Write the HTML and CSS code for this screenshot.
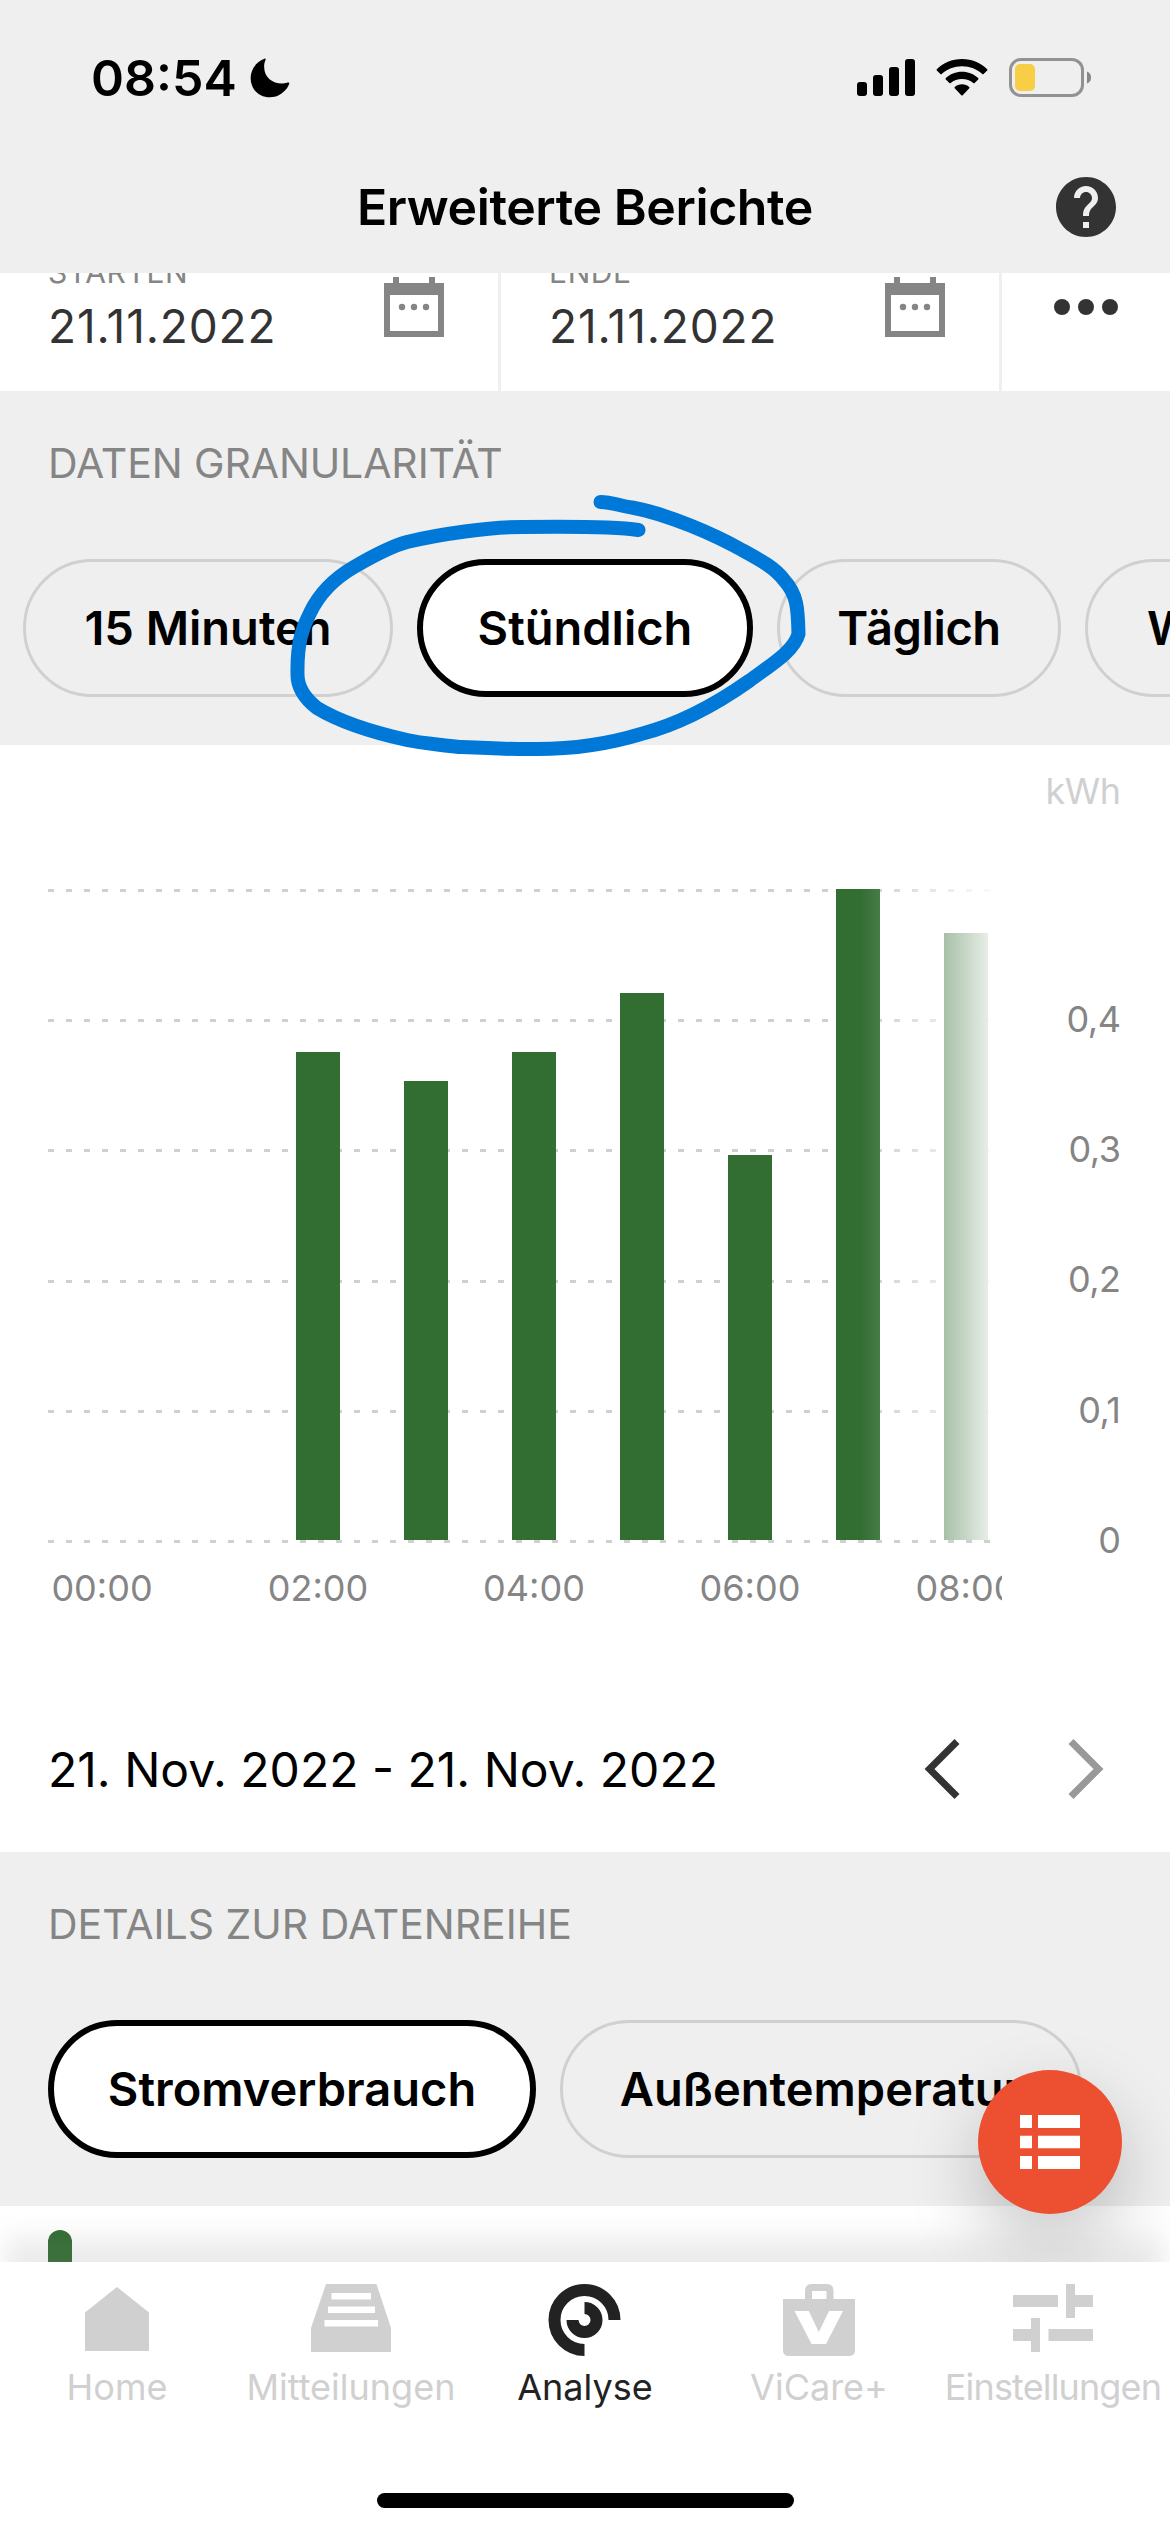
FILE: index.html
```html
<!DOCTYPE html>
<html lang="de">
<head>
<meta charset="utf-8">
<title>Erweiterte Berichte</title>
<link rel="stylesheet" href="styles.css">
</head>
<body>
<div class="screen">
  <header class="top">
    <div class="status">
      <div class="status-left">
        <span class="time">08:54</span>
        <svg class="moon" width="40" height="40" viewBox="0 0 40 40"><path d="M15 .6C3 5 -2 17 2 27.500C7 40 22 42.500 31.500 35.500C36 32 38.500 29 39.400 25C39.300 24.300 38.500 24.300 37.800 24.600C26 28 12.500 21 14.300 6C14.500 4 15.500 2.500 15.700 1.200C15.700 .7 15.400 .5 15 .6Z"/></svg>
      </div>
      <div class="status-right">
        <svg width="60" height="40" viewBox="0 0 60 40"><rect x="1" y="24" width="10" height="14" rx="3"/><rect x="17" y="17" width="10" height="21" rx="3"/><rect x="33" y="9" width="10" height="29" rx="3"/><rect x="49" y="1" width="10" height="37" rx="3"/></svg>
        <svg class="wifi" width="52" height="40" viewBox="0 0 52 40"><path d="M26 1C36 1 45 5 51.200 11.200C51.600 11.700 51.600 12 51.200 12.500L47.600 16C47.200 16.400 46.700 16.400 46.300 16C41 11.200 34 8.300 26 8.300S11 11.200 5.700 16C5.300 16.400 4.800 16.400 4.400 16L.8 12.500C.4 12 .4 11.700 .8 11.200C7 5 16 1 26 1Z"/><path d="M26 13.800C32.300 13.800 38 16.200 42.200 20.100C42.600 20.600 42.600 21 42.200 21.400L38.600 25C38.200 25.300 37.700 25.300 37.300 25C34.300 22.400 30.300 21 26 21S17.700 22.400 14.700 25C14.300 25.300 13.800 25.300 13.400 25L9.800 21.400C9.400 21 9.400 20.600 9.800 20.100C14 16.200 19.700 13.800 26 13.800Z"/><path d="M26 26.300C28.800 26.300 31.300 27.300 33.200 28.900C33.700 29.300 33.700 29.800 33.300 30.200L26.700 37.200C26.300 37.700 25.700 37.700 25.300 37.200L18.700 30.200C18.300 29.800 18.300 29.300 18.800 28.900C20.700 27.300 23.200 26.300 26 26.300Z"/></svg>
        <svg width="84" height="40" viewBox="0 0 84 40"><rect x="1.500" y="1.500" width="72" height="36" rx="10.500" fill="none" stroke="#929292" stroke-width="3"/><rect x="6" y="6" width="20" height="27" rx="5" fill="#f7ce46"/><path d="M78 13.500Q82 15 82 19.500T78 25.500Z" fill="#868686"/></svg>
      </div>
    </div>
    <div class="titlebar">
      <h1>Erweiterte Berichte</h1>
      <svg class="help" width="72" height="72" viewBox="0 0 24 24"><path fill="#333" d="M12 2C6.480 2 2 6.480 2 12s4.480 10 10 10 10-4.480 10-10S17.520 2 12 2zm1 17h-2v-2h2v2zm2.070-7.750l-.9.920C13.450 12.900 13 13.500 13 15h-2v-.5c0-1.100.45-2.100 1.170-2.830l1.240-1.260c.37-.36.59-.86.59-1.410 0-1.100-.9-2-2-2s-2 .9-2 2H8c0-2.210 1.790-4 4-4s4 1.790 4 4c0 .88-.36 1.680-.93 2.250z"/></svg>
    </div>
  </header>

  <main class="content">
    <section class="dates">
      <div class="date">
        <div class="date-text"><span class="date-label">STARTEN</span><span class="date-value">21.11.2022</span></div>
        <svg class="cal" width="60" height="60" viewBox="0 0 60 60"><path fill="#858585" fill-rule="evenodd" d="M9 0h6v6h30V0h6v6h9v54H0V6h9ZM6 18v36h48V18Z"/><g fill="#858585"><circle cx="18" cy="30" r="3.200"/><circle cx="30" cy="30" r="3.200"/><circle cx="42" cy="30" r="3.200"/></g></svg>
      </div>
      <div class="date">
        <div class="date-text"><span class="date-label">ENDE</span><span class="date-value">21.11.2022</span></div>
        <svg class="cal" width="60" height="60" viewBox="0 0 60 60"><path fill="#858585" fill-rule="evenodd" d="M9 0h6v6h30V0h6v6h9v54H0V6h9ZM6 18v36h48V18Z"/><g fill="#858585"><circle cx="18" cy="30" r="3.200"/><circle cx="30" cy="30" r="3.200"/><circle cx="42" cy="30" r="3.200"/></g></svg>
      </div>
      <div class="more"><i></i><i></i><i></i></div>
    </section>

    <section class="group">
      <h2 class="l-gran">DATEN GRANULARITÄT</h2>
      <div class="chips chips-gran">
        <span class="chip c15">15 Minuten</span>
        <span class="chip chour on">Stündlich</span>
        <span class="chip cday">Täglich</span>
        <span class="chip cweek">Wöchentlich</span>
      </div>
      <svg class="marker" width="540" height="280" viewBox="280 480 540 280"><path fill="none" stroke="#0078d7" stroke-width="14" stroke-linecap="round" stroke-linejoin="round" d="M600.500 502C612 502 620 506 632 507.500C668 514 715 535 742 550C762 561 775 568 784 580C797 594 798 608 798.500 634C794 651 772 664 749 681C715 705 680 724 641 734C605 745 570 749 537 749C510 749.500 480 748 459 747C435 744 420 743 407 740C380 734 345 725 317 708C303 697 297 686 297.500 673C297 642 303 626 310 613C320 592 335 578 354 567C378 553 392 546 407 542C440 534 490 527 522 527C560 526.500 615 526.500 638.500 530"/></svg>
    </section>

    <section class="chart">
      <svg width="1170" height="920" viewBox="0 745 1170 920">
        <defs>
          <linearGradient id="fade" gradientUnits="userSpaceOnUse" x1="860" y1="0" x2="1002" y2="0">
            <stop offset="0" stop-color="#fff" stop-opacity="0"/>
            <stop offset=".141" stop-color="#fff" stop-opacity=".1"/>
            <stop offset=".592" stop-color="#fff" stop-opacity=".57"/>
            <stop offset=".9" stop-color="#fff" stop-opacity=".88"/>
            <stop offset="1" stop-color="#fff"/>
          </linearGradient>
          <clipPath id="plot"><rect x="0" y="745" width="1002" height="920"/></clipPath>
        </defs>
        <g stroke="#d0d0d0" stroke-width="3" stroke-dasharray="6 12">
          <path d="M48 890.500H1002M48 1020.500H1002M48 1150.500H1002M48 1281.500H1002M48 1411.500H1002"/>
        </g>
        <g fill="#326d32">
          <rect x="296" y="1052" width="44" height="488"/>
          <rect x="404" y="1081" width="44" height="459"/>
          <rect x="512" y="1052" width="44" height="488"/>
          <rect x="620" y="993" width="44" height="547"/>
          <rect x="728" y="1155" width="44" height="385"/>
          <rect x="836" y="889" width="44" height="651"/>
          <rect x="944" y="933" width="44" height="607"/>
        </g>
        <rect x="860" y="880" width="142" height="660" fill="url(#fade)"/>
        <path d="M48 1541.500H1002" stroke="#d0d0d0" stroke-width="3" stroke-dasharray="6 12"/>
        <g class="xlab" clip-path="url(#plot)">
          <text x="102" y="1601">00:00</text><text x="318" y="1601">02:00</text><text x="534" y="1601">04:00</text><text x="750" y="1601">06:00</text><text x="966" y="1601">08:00</text>
        </g>
        <g class="ylab">
          <text class="unit" x="1120.500" y="803.500">kWh</text>
          <text x="1120.500" y="1032">0,4</text><text x="1120.500" y="1162">0,3</text><text x="1120.500" y="1292">0,2</text><text x="1120.500" y="1423">0,1</text><text x="1120.500" y="1553">0</text>
        </g>
      </svg>
      <div class="range">
        <span class="range-text">21. Nov. 2022 - 21. Nov. 2022</span>
        <svg width="180" height="62" viewBox="0 0 180 62" fill="none" stroke-width="7"><path stroke="#333" d="M33 3.500L5.500 31L33 58.500"/><path stroke="#999" d="M147 3.500L174.500 31L147 58.500"/></svg>
      </div>
    </section>

    <section class="group">
      <h2 class="l-det">DETAILS ZUR DATENREIHE</h2>
      <div class="chips chips-det">
        <span class="chip cpow on">Stromverbrauch</span>
        <span class="chip ctemp">Außentemperatur</span>
      </div>
    </section>
    <section class="legend"><div class="pill"></div></section>
    <button class="fab" aria-label="Liste"><svg width="60" height="54" viewBox="0 0 60 54" fill="#fff"><path d="M0 0h12v13H0zM18 0h42v13H18zM0 20.700h12v12.600H0zM18 20.700h42v12.600H18zM0 41h12v13H0zM18 41h42v13H18z"/></svg></button>
  </main>

  <nav class="tabs">
    <div class="tab"><svg width="80" height="76" viewBox="77 2282 80 76"><path d="M117 2287L149 2312.500V2351H85V2312.500Z"/></svg><span class="t1">Home</span></div>
    <div class="tab"><svg width="84" height="76" viewBox="308 2282 84 76"><path fill-rule="evenodd" d="M325 2284H375.500L390 2328V2352H310V2328ZM330.500 2293V2299.500H370V2293ZM327 2306.500V2313H374V2306.500ZM323.500 2320V2326.500H377V2320Z"/></svg><span class="t2">Mitteilungen</span></div>
    <div class="tab active"><svg width="80" height="76" viewBox="545 2282 80 76"><path fill="none" stroke="#222" stroke-width="12" d="M614.500 2320A30 30 0 1 0 584.500 2350M572.500 2320A12 12 0 1 0 584.500 2308"/></svg><span class="t3">Analyse</span></div>
    <div class="tab"><svg width="80" height="76" viewBox="779 2282 80 76"><path fill-rule="evenodd" d="M783 2299H805V2291Q805 2284 812 2284H826.500Q833.500 2284 833.500 2291V2299H855V2350Q855 2356 849 2356H789Q783 2356 783 2350ZM812 2291V2299H826.500V2291ZM794.500 2311L811.500 2344H826L843 2311H829L818.800 2332L808.800 2311Z"/></svg><span class="t4">ViCare+</span></div>
    <div class="tab"><svg width="84" height="76" viewBox="1011 2282 84 76"><path d="M1013 2295h45v12h-45zM1066 2284h9v11h18v12h-18v11h-9zM1013 2329h18v-11h9v34h-9v-11h-18zM1048.500 2329h44.500v12h-44.500z"/></svg><span class="t5">Einstellungen</span></div>
    <div class="home-bar"></div>
  </nav>
</div>
</body>
</html>
```
FILE: styles.css
```css
* { box-sizing: border-box; margin: 0; padding: 0; }
body { width: 1170px; height: 2532px; overflow: hidden; background: #fff; font-family: Inter, "Liberation Sans", sans-serif; color: #000; }
svg { display: block; flex: none; }
.screen { width: 1170px; height: 2532px; display: flex; flex-direction: column; }

.top { height: 273px; background: #efefef; flex: none; }
.status { height: 141px; padding: 16px 77px 1px 91px; display: flex; justify-content: space-between; align-items: center; }
.status-left, .status-right { display: flex; align-items: center; }
.time { font-size: 50px; font-weight: 600; line-height: 60px; width: 159px; white-space: nowrap; }
.wifi { margin: 0 21px 0 20px; }
.titlebar { height: 132px; display: grid; grid-template-columns: 122px 1fr 122px; align-items: center; }
h1 { grid-column: 2; font-size: 50px; font-weight: 600; line-height: 60px; letter-spacing: -.4px; text-align: center; white-space: nowrap; }
.help { margin-left: 2px; }

.content { flex: 1; overflow: hidden; min-height: 0; position: relative; }
.dates { height: 118px; display: grid; grid-template-columns: 501px 501px 168px; background: #fff; }
.date { border-right: 3px solid #efefef; padding-left: 48px; padding-right: 54px; display: flex; justify-content: space-between; height: 118px; }
.date-text { display: flex; flex-direction: column; justify-content: flex-end; height: 118px; padding-bottom: 35px; white-space: nowrap; }
.date-label { font-size: 30px; line-height: 36px; color: #858585; letter-spacing: .6px; margin-bottom: 6px; }
.date-value { font-size: 46px; line-height: 60px; letter-spacing: .85px; color: #333; }
.cal { margin-top: 4px; }
.more { display: flex; gap: 8px; padding: 26px 0 0 52px; }
.more i { width: 16px; height: 16px; border-radius: 50%; background: #333; }

.group { height: 354px; background: #efefef; position: relative; }
h2 { font-size: 41px; font-weight: 400; line-height: 50px; color: #858585; padding: 47px 0 0 48px; white-space: nowrap; }
.l-gran { letter-spacing: -.1px; }
.chips { display: flex; gap: 24px; padding-top: 71px; }
.chips-gran { padding-left: 23px; }
.chips-det { padding-left: 48px; }
.chip { flex: none; height: 138px; border-radius: 69px; border: 3px solid #d0d0d0; padding-bottom: 1px; font-size: 47px; font-weight: 600; display: flex; align-items: center; justify-content: center; white-space: nowrap; }
.chip.on { background: #fff; border: 6px solid #000; }
.c15 { width: 370px; }
.chour { width: 336px; }
.cday { width: 284px; letter-spacing: -.4px; }
.cweek { padding: 0 60px 1px 59px; }
.cpow { width: 488px; }
.ctemp { width: 522px; }
.marker { position: absolute; left: 280px; top: 89px; z-index: 2; }

.chart { height: 1107px; background: #fff; }
.chart text { font-size: 36px; fill: #858585; }
.xlab { text-anchor: middle; }
.ylab { text-anchor: end; letter-spacing: -.5px; }
.chart .unit { fill: #d0d0d0; }
.range { display: flex; justify-content: space-between; align-items: center; padding: 0 66px 0 48px; height: 208px; }
.range-text { font-size: 48px; white-space: nowrap; }

.legend { height: 56px; background: #fff; padding: 24px 0 0 48px; }
.pill { width: 24px; height: 60px; border-radius: 12px; background: #326d32; }
.fab { position: absolute; left: 978px; top: 1797px; width: 144px; height: 144px; border: 0; border-radius: 50%; background: #ec5030; display: flex; align-items: center; justify-content: center; box-shadow: 0 30px 72px rgba(0,0,0,.22); }

.tabs { height: 270px; flex: none; background: #fff; position: relative; z-index: 1; display: grid; grid-template-columns: repeat(5, 234px); grid-template-rows: 231px 15px; box-shadow: 0 -30px 24px -6px rgba(130,130,130,.16); }
.tab { display: flex; flex-direction: column; align-items: center; padding-top: 20px; fill: #d0d0d0; color: #d0d0d0; font-size: 36px; line-height: 44px; }
.tab span { margin-top: 7px; white-space: nowrap; }
.tab.active { color: #222; }
.t5 { letter-spacing: -.85px; }
.home-bar { grid-column: 1 / -1; justify-self: center; width: 417px; height: 15px; border-radius: 8px; background: #000; }
```
